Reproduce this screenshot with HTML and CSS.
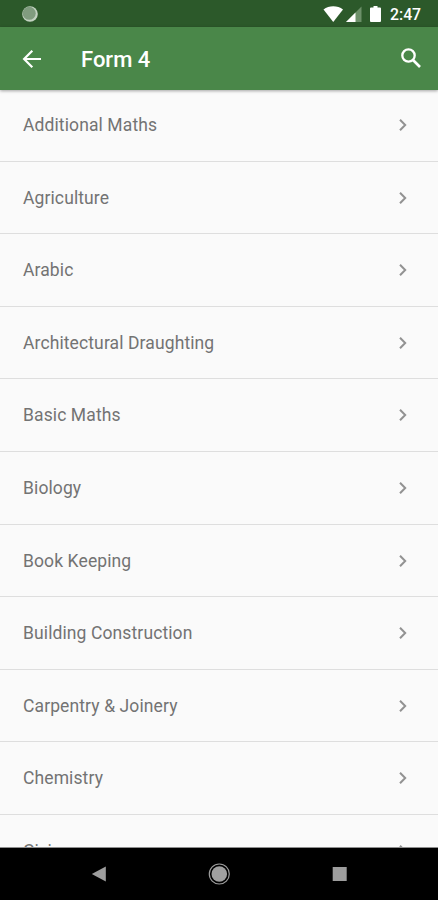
FILE: index.html
```html
<!DOCTYPE html>
<html lang="en">
<head>
<meta charset="utf-8">
<title>Form 4</title>
<link rel="stylesheet" href="styles.css">
</head>
<body>
<div class="screen">
  <div class="status">
    <svg class="status-left" width="18" height="18" viewBox="0 0 18 18"><circle cx="9" cy="9" r="7.8" fill="#c3d2c2"/><circle cx="8.2" cy="8.3" r="6.5" fill="#809c7f"/></svg>
    <svg class="status-icons" width="60" height="18" viewBox="0 0 60 18"><path d="M0.5 4.5C6 .1 14.500 .1 20 4.500L10.250 17Z" fill="#fff"/><path d="M38.500 1.500V17H23Z" fill="#6c9069"/><path d="M32.500 7.500V17H23Z" fill="#fff"/><path d="M50.500 1h4v1.500h2.500q1 0 1 1V16q0 1-1 1h-9q-1 0-1-1V3.500q0-1 1-1H50.500Z" fill="#fff"/></svg>
    <span class="clock">2:47</span>
  </div>
  <header class="appbar">
    <svg class="back" width="20" height="20" viewBox="0 0 20 20" fill="none" stroke="#fff" stroke-width="2.200"><path d="M19 10H2.500M10.300 1.800L2.100 10l8.200 8.200"/></svg>
    <h1 class="title">Form 4</h1>
    <svg class="search" width="22" height="22" viewBox="0 0 22 22" fill="none" stroke="#fff" stroke-width="2.300"><circle cx="8.500" cy="7.500" r="6.200"/><path d="M13 12l7 7" stroke-width="2.700"/></svg>
  </header>
  <main class="list">
    <div class="row"><span>Additional Maths</span><svg class="chev" viewBox="0 0 10 14"><path d="M2 1.800L7.200 7 2 12.200"/></svg></div>
    <div class="row"><span>Agriculture</span><svg class="chev" viewBox="0 0 10 14"><path d="M2 1.800L7.200 7 2 12.200"/></svg></div>
    <div class="row"><span>Arabic</span><svg class="chev" viewBox="0 0 10 14"><path d="M2 1.800L7.200 7 2 12.200"/></svg></div>
    <div class="row"><span>Architectural Draughting</span><svg class="chev" viewBox="0 0 10 14"><path d="M2 1.800L7.200 7 2 12.200"/></svg></div>
    <div class="row"><span>Basic Maths</span><svg class="chev" viewBox="0 0 10 14"><path d="M2 1.800L7.200 7 2 12.200"/></svg></div>
    <div class="row"><span>Biology</span><svg class="chev" viewBox="0 0 10 14"><path d="M2 1.800L7.200 7 2 12.200"/></svg></div>
    <div class="row"><span>Book Keeping</span><svg class="chev" viewBox="0 0 10 14"><path d="M2 1.800L7.200 7 2 12.200"/></svg></div>
    <div class="row"><span>Building Construction</span><svg class="chev" viewBox="0 0 10 14"><path d="M2 1.800L7.200 7 2 12.200"/></svg></div>
    <div class="row"><span>Carpentry &amp; Joinery</span><svg class="chev" viewBox="0 0 10 14"><path d="M2 1.800L7.200 7 2 12.200"/></svg></div>
    <div class="row"><span>Chemistry</span><svg class="chev" viewBox="0 0 10 14"><path d="M2 1.800L7.200 7 2 12.200"/></svg></div>
    <div class="row"><span>Civics</span><svg class="chev" viewBox="0 0 10 14"><path d="M2 1.800L7.200 7 2 12.200"/></svg></div>
  </main>
  <nav class="navbar">
    <svg width="16" height="18" viewBox="0 0 16 18"><path d="M.8 9L14.800 1.500v15Z" fill="#9d9d9d"/></svg>
    <svg width="22" height="22" viewBox="0 0 22 22"><circle cx="11.300" cy="11" r="10" fill="none" stroke="#9d9d9d" stroke-width="1.200"/><circle cx="11.300" cy="11" r="7.800" fill="#a0a0a0"/></svg>
    <svg width="16" height="16" viewBox="0 0 16 16"><path d="M1.700 1h14v14h-14z" fill="#9d9d9d"/></svg>
  </nav>
</div>
</body>
</html>
```
FILE: styles.css
```css
* { box-sizing: border-box; }
body { margin: 0; font-family: Roboto, sans-serif; }
.screen { width: 438px; height: 900px; display: flex; flex-direction: column; overflow: hidden; background: #fafafa; }
.status { height: 27px; flex: none; display: flex; align-items: center; background: #2c592a; padding: 1px 17px 0 21px; }
.status-icons { margin-left: auto; margin-right: 7px; }
.clock { color: #fff; font-size: 15.800px; font-weight: 500; line-height: 26px; width: 31px; padding-top: 1px; white-space: nowrap; }
.appbar { height: 63px; flex: none; display: flex; align-items: center; background: #4a8749; padding: 0 16px 0 22px; box-shadow: 0 1px 3px rgba(0,0,0,.35); z-index: 1; }
.title { margin: 2px 0 0 39px; color: #fff; font-size: 22px; font-weight: 500; line-height: 28px; }
.search { margin-left: auto; }
.list { flex: 1; min-height: 0; overflow: hidden; margin-top: -1px; border-bottom: 1px solid #8e8e8e; }
.row { height: 72.600px; display: flex; align-items: center; justify-content: space-between; padding: .6px 30px 0 23px; border-bottom: 1px solid #dedede; color: #737373; font-size: 17.500px; letter-spacing: .11px; line-height: 24px; }
.chev { width: 10px; height: 14px; fill: none; stroke: #929292; stroke-width: 2; }
.navbar { height: 52px; flex: none; display: flex; align-items: center; justify-content: space-between; background: #000; padding: 0 91px; }
```
